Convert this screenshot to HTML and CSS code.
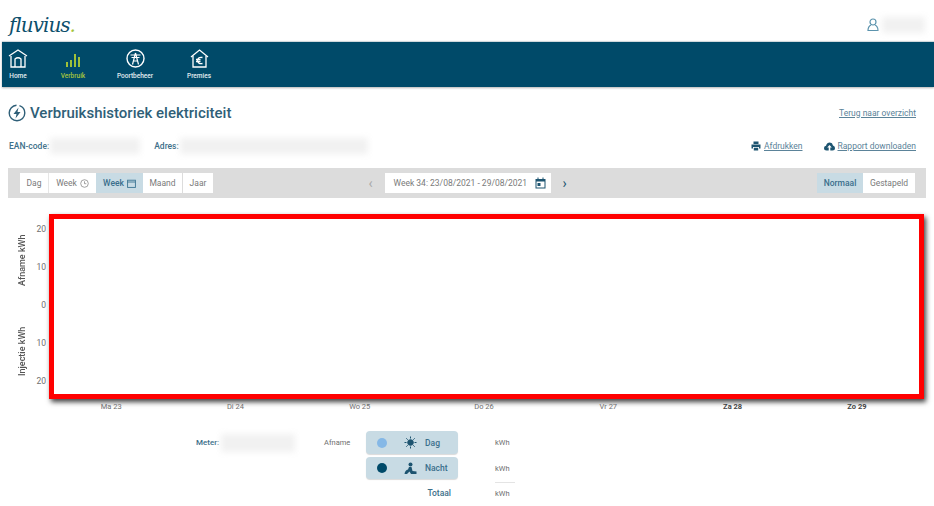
FILE: index.html
```html
<!DOCTYPE html>
<html lang="nl">
<head>
    <meta charset="UTF-8">
    <meta name="viewport" content="width=device-width, initial-scale=1.0">
    <title>Verbruikshistoriek elektriciteit</title>
    <link rel="stylesheet" href="styles.css">
</head>
<body>
    <header class="top-bar">
        <div class="logo">fluvius<span class="logo-dot">.</span></div>
        <div class="user">
            <svg width="12" height="14" viewBox="0 0 12 14" fill="none" stroke="#5b93ad" stroke-width="1.2">
                <circle cx="6" cy="4" r="3"/>
                <path d="M4 7 Q1 8.500 1 12.500 H11 Q11 8.500 8 7"/>
            </svg>
            <div class="redacted user-name"></div>
        </div>
    </header>

    <nav class="main-nav">
        <a class="nav-item nav-home">
            <svg width="20" height="19" viewBox="0 0 20 19" fill="none" stroke="#fff" stroke-width="1.3">
                <path d="M1 7 L10 1 L19 7"/>
                <path d="M3 7 V18 H17 V7"/>
                <path d="M7 18 V10 Q10 7.500 13 10 V18"/>
            </svg>
            <span>Home</span>
        </a>
        <a class="nav-item nav-active nav-usage">
            <svg width="16" height="19" viewBox="0 0 16 19" fill="#9fc13a">
                <rect x="1" y="13" width="2" height="5"/>
                <rect x="5" y="11" width="2" height="7"/>
                <rect x="9" y="5" width="2" height="13"/>
                <rect x="13" y="8" width="2" height="10"/>
            </svg>
            <span>Verbruik</span>
        </a>
        <a class="nav-item nav-gate">
            <svg width="19" height="19" viewBox="0 0 19 19" fill="none" stroke="#fff">
                <circle cx="9.500" cy="9.500" r="8.500" stroke-width="1.400"/>
                <path d="M4.500 6 H14.500 M5.500 8.500 H13.500 M9.500 4 L6.500 15.500 M9.500 4 L12.500 15.500 M7.500 12 H11.500" stroke-width="1.200"/>
            </svg>
            <span>Poortbeheer</span>
        </a>
        <a class="nav-item nav-premies">
            <svg width="19" height="19" viewBox="0 0 19 19" fill="none" stroke="#fff" stroke-width="1.300">
                <path d="M1 8 L9.500 1 L18 8"/>
                <path d="M3 7 V18 H16 V7"/>
                <path d="M12.500 8.500 Q8 7.500 7.500 11.500 Q8 15.500 12.500 14.500 M6 10.500 H10.500 M6 12.500 H10.500"/>
            </svg>
            <span>Premies</span>
        </a>
    </nav>

    <main>
        <div class="title-row">
            <h1>
                <svg width="18" height="18" viewBox="0 0 18 18" fill="none">
                    <circle cx="9" cy="9" r="7.800" stroke="#2f5f78" stroke-width="1.400" stroke-dasharray="36 3"/>
                    <path d="M10.500 3.500 L5.500 10 H8.500 L7.500 14.500 L12.500 8 H9.500 Z" fill="#2f5f78"/>
                </svg>
                Verbruikshistoriek elektriciteit
            </h1>
            <a class="link">Terug naar overzicht</a>
        </div>

        <div class="info-row">
            <div class="info-left">
                <b>EAN-code:</b>
                <div class="redacted ean-value"></div>
                <b>Adres:</b>
                <div class="redacted address-value"></div>
            </div>
            <div class="info-right">
                <a class="link icon-link">
                    <svg width="10" height="10" viewBox="0 0 10 10" fill="#1d5470">
                        <path d="M2.500 0.500 H7.500 V3 H2.500 Z M0.500 3.500 H9.500 V7.500 H8 V6 H2 V7.500 H0.500 Z M2.800 6.800 H7.200 V9.500 H2.800 Z"/>
                    </svg>
                    Afdrukken
                </a>
                <a class="link icon-link">
                    <svg width="11" height="9" viewBox="0 0 11 9" fill="#1d5470">
                        <path d="M2.500 8.500 Q0 8.500 0 6 Q0 4 2 3.700 Q3 0.500 5.800 0.500 Q8.500 0.700 9 3.500 Q11 4 11 6 Q11 8.500 8.500 8.500 H6.300 V5.500 H7.800 L5.500 3 L3.200 5.500 H4.700 V8.500 Z"/>
                    </svg>
                    Rapport downloaden
                </a>
            </div>
        </div>

        <div class="toolbar">
            <div class="btn-group">
                <button class="btn btn-day">Dag</button>
                <button class="btn btn-week">Week
                    <svg width="9" height="9" viewBox="0 0 9 9" fill="none" stroke="#8a8a8a" stroke-width="0.800">
                        <circle cx="4.500" cy="4.500" r="3.800"/>
                        <path d="M4.500 2.300 V4.700 H6.300"/>
                    </svg>
                </button>
                <button class="btn btn-week-cal active">Week
                    <svg width="9" height="9" viewBox="0 0 9 9" fill="none" stroke="#3a7492" stroke-width="0.900">
                        <rect x="0.600" y="1.200" width="7.800" height="7.200"/>
                        <path d="M0.600 3 H8.400"/>
                    </svg>
                </button>
                <button class="btn btn-month">Maand</button>
                <button class="btn btn-year">Jaar</button>
            </div>

            <div class="date-nav">
                <span class="chevron chevron-off">‹</span>
                <div class="date-box">
                    <span>Week 34: 23/08/2021 - 29/08/2021</span>
                    <svg width="11" height="12" viewBox="0 0 11 12" fill="#1d5470">
                        <path d="M0.500 2 H2.500 V0.500 H3.500 V2 H7.500 V0.500 H8.500 V2 H10.500 V11.500 H0.500 Z M1.500 4.500 V10.500 H9.500 V4.500 Z"/>
                        <rect x="2.500" y="6" width="3" height="3"/>
                    </svg>
                </div>
                <span class="chevron">›</span>
            </div>

            <div class="btn-group btn-group-right">
                <button class="btn btn-normal active">Normaal</button>
                <button class="btn btn-stacked">Gestapeld</button>
            </div>
        </div>

        <section class="chart">
            <div class="axis-titles">
                <span>Afname kWh</span>
                <span>Injectie kWh</span>
            </div>
            <div class="axis-values">
                <span>20</span>
                <span>10</span>
                <span>0</span>
                <span>10</span>
                <span>20</span>
            </div>
            <div class="plot"></div>
            <div class="days">
                <span>Ma 23</span>
                <span>Di 24</span>
                <span>Wo 25</span>
                <span>Do 26</span>
                <span>Vr 27</span>
                <span class="weekend">Za 28</span>
                <span class="weekend">Zo 29</span>
            </div>
        </section>

        <section class="legend">
            <div class="meter">
                <b>Meter:</b>
                <div class="redacted meter-value"></div>
            </div>
            <div class="legend-label">Afname</div>
            <div class="pill">
                <span class="dot dot-day"></span>
                <svg width="13" height="13" viewBox="0 0 13 13" stroke="#1d5470" stroke-width="1">
                    <circle cx="6.500" cy="6.500" r="2.800" fill="#1d5470"/>
                    <path d="M6.500 0.500 V2.500 M6.500 10.500 V12.500 M0.500 6.500 H2.500 M10.500 6.500 H12.500 M2.300 2.300 L3.700 3.700 M9.300 9.300 L10.700 10.700 M2.300 10.700 L3.700 9.300 M9.300 3.700 L10.700 2.300"/>
                </svg>
                <span class="pill-name">Dag</span>
            </div>
            <div class="unit">kWh</div>

            <div class="pill pill-row2">
                <span class="dot dot-night"></span>
                <svg width="13" height="13" viewBox="0 0 13 13" fill="#1d5470">
                    <circle cx="6.500" cy="2.500" r="2"/>
                    <path d="M5 5 L7.500 5 L8.500 9 L12.500 9.500 V12 H7 L5.500 9.500 L3 12 H0.500 Q1 8 4 7.500 Z"/>
                </svg>
                <span class="pill-name">Nacht</span>
            </div>
            <div class="unit unit-row2">kWh</div>

            <div class="total-label">Totaal</div>
            <div class="unit unit-total">kWh</div>
        </section>
    </main>
</body>
</html>
```

FILE: styles.css
```css
* {
    box-sizing: border-box;
}
body {
    margin: 0;
    font-family: Roboto, "Liberation Sans", sans-serif;
    background: #fff;
    color: #6f6f6f;
    overflow: hidden;
}
b {
    font-weight: 500;
    color: #3d6f8a;
}
.redacted {
    background: #f1f1f1;
    filter: blur(3px);
}

/* top */
.top-bar {
    height: 41px;
    display: flex;
    justify-content: space-between;
    align-items: center;
    padding: 8px 9px 0 9px;
}
.logo {
    font-family: "DejaVu Serif", serif;
    font-style: italic;
    font-size: 20px;
    letter-spacing: -1px;
    color: #0d4f6c;
}
.logo-dot {
    color: #a4c53c;
}
.user {
    display: flex;
    align-items: center;
    gap: 3px;
}
.user-name {
    width: 43px;
    height: 16px;
}
.main-nav {
    height: 46px;
    margin-left: 2px;
    background: #004a69;
    border-top: 1px solid #cfd8dc;
    display: flex;
    box-shadow: 0 1px 2px rgba(0,0,0,0.3);
}
.nav-item {
    display: flex;
    flex-direction: column;
    align-items: center;
    gap: 4px;
    padding-top: 7px;
    color: #e3edf1;
    font-size: 6.5px;
    font-weight: 500;
}
.nav-active {
    color: #a4c53c;
}
.nav-home {
    width: 32px;
}
.nav-usage {
    width: 36px;
    margin-left: 21px;
}
.nav-gate {
    width: 44px;
    margin-left: 22px;
}
.nav-premies {
    width: 34px;
    margin-left: 25px;
}

/* title + info */
.title-row {
    display: flex;
    justify-content: space-between;
    align-items: center;
    padding: 11px 18px 0 8px;
    height: 40px;
}
h1 {
    margin: 0;
    display: flex;
    align-items: center;
    gap: 4px;
    font-size: 15px;
    font-weight: 500;
    color: #2f5f78;
}
.link {
    font-size: 8.500px;
    color: #5b8399;
    text-decoration: underline;
}
.info-row {
    display: flex;
    justify-content: space-between;
    align-items: center;
    height: 20px;
    margin-top: 9px;
    padding: 0 18px 0 9px;
    font-size: 8.500px;
}
.info-left {
    display: flex;
    align-items: center;
}
.ean-value {
    width: 90px;
    height: 16px;
    margin: 0 14px 0 1px;
}
.address-value {
    width: 188px;
    height: 16px;
    margin-left: 1px;
}
.info-right {
    display: flex;
    gap: 21px;
}
.icon-link {
    display: flex;
    align-items: center;
    gap: 3px;
}

/* toolbar */
.toolbar {
    margin: 12px 8px 0;
    height: 30px;
    background: #dcdcdc;
    display: grid;
    grid-template-columns: 1fr auto 1fr;
    align-items: center;
    padding: 0 11px 0 12px;
}
.btn-group {
    display: flex;
    height: 20px;
}
.btn-group-right {
    justify-self: end;
}
.btn {
    border: 0;
    padding: 0;
    background: #fff;
    color: #7a7a7a;
    font-family: inherit;
    font-size: 8.500px;
    display: flex;
    align-items: center;
    justify-content: center;
    gap: 3px;
}
.btn.active {
    background: #c8dbe4;
    color: #3a6f8c;
    font-weight: 500;
}
.btn-day { width: 28px; }
.btn-week { width: 48px; border-left: 1px solid #e6e6e6; }
.btn-week-cal { width: 47px; }
.btn-month { width: 39px; margin-right: 1px; }
.btn-year { width: 30px; }
.btn-normal { width: 46px; }
.btn-stacked { width: 52px; }
.date-nav {
    display: flex;
    align-items: center;
    gap: 12px;
}
.date-box {
    width: 166px;
    height: 20px;
    background: #fff;
    display: flex;
    align-items: center;
    justify-content: space-between;
    padding: 0 5px 0 9px;
    font-size: 8.500px;
    color: #7a7a7a;
}
.chevron {
    font-size: 14px;
    line-height: 14px;
    color: #1d5470;
    width: 4px;
}
.chevron-off {
    color: #a9a9a9;
}

/* chart */
.chart {
    display: grid;
    grid-template-columns: 16px 20px 875px;
    grid-template-rows: 185px 15px;
    margin: 16px 0 0 13px;
}
.axis-titles {
    display: flex;
    flex-direction: column;
    align-items: center;
    gap: 39px;
    padding: 20px 0 0 1px;
}
.axis-titles span {
    writing-mode: vertical-rl;
    transform: rotate(180deg);
    font-size: 9px;
    font-weight: 500;
    color: #555;
    height: 52px;
    text-align: center;
    white-space: nowrap;
}
.axis-values {
    display: flex;
    flex-direction: column;
    align-items: flex-end;
    justify-content: space-between;
    padding: 10px 3px 13px 0;
    font-size: 8.500px;
    line-height: 10px;
}
.plot {
    background: #fff;
    border: 5px solid #f00;
    box-shadow: 2px 3px 5px rgba(0,0,0,0.75);
}
.days {
    grid-column: 3;
    display: grid;
    grid-template-columns: repeat(7, 124.300px);
    align-items: center;
    justify-items: center;
    font-size: 7.500px;
}
.weekend {
    font-weight: 700;
    color: #444;
}

/* legend */
.legend {
    display: grid;
    grid-template-columns: 128px 42px 92px 37px 30px;
    grid-template-rows: 23px 22px 22px;
    row-gap: 3px;
    margin: 17px 0 0 196px;
    font-size: 7.500px;
    align-items: center;
}
.meter {
    display: flex;
    align-items: center;
    font-size: 8px;
}
.meter-value {
    width: 74px;
    height: 18px;
    margin-left: 2px;
}
.pill {
    height: 100%;
    background: #c8dbe4;
    border-radius: 4px;
    display: flex;
    align-items: center;
    padding-left: 11px;
    box-shadow: 0 1px 1px rgba(0,0,0,0.15);
}
.pill-row2 {
    grid-column: 3;
    grid-row: 2;
}
.dot {
    width: 10px;
    height: 10px;
    border-radius: 50%;
    margin-right: 17px;
}
.dot-day {
    background: #85b8e6;
}
.dot-night {
    background: #004a69;
}
.pill-name {
    margin-left: 8px;
    font-size: 8.500px;
    font-weight: 500;
    color: #3a6f8c;
}
.unit-row2 {
    grid-row: 2;
}
.unit {
    padding-left: 37px;
    grid-column: 4 / 6;
}
.unit-total {
    grid-row: 3;
    align-self: stretch;
    display: flex;
    align-items: center;
    margin-left: 37px;
    padding-left: 0;
    width: 20px;
    border-top: 1px solid #e4e4e4;
}
.total-label {
    grid-column: 3;
    grid-row: 3;
    text-align: right;
    padding-right: 7px;
    font-size: 8.500px;
    font-weight: 500;
    color: #3d6f8a;
}
```
